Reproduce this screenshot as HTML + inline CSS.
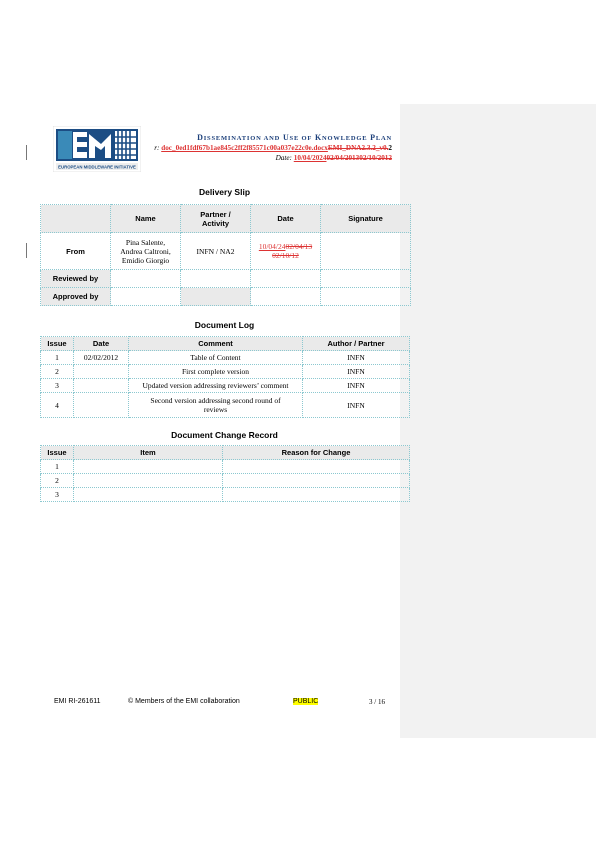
<!DOCTYPE html>
<html><head><meta charset="utf-8"><style>
body{margin:0;width:596px;height:842px;position:relative;background:#fff;overflow:hidden;font-family:"Liberation Sans",sans-serif;}
.a{position:absolute;}
.panel{left:400px;top:104px;width:196px;height:634px;background:#f2f2f2;}
table{position:absolute;border-collapse:collapse;table-layout:fixed;}
td{border:1px dotted #8cc8d0;padding:0;text-align:center;vertical-align:middle;font-family:"Liberation Serif",serif;font-size:7.5px;line-height:9px;}
td.h{background:#eaeaea;font-family:"Liberation Sans",sans-serif;font-weight:bold;font-size:7.5px;}
.t{font-weight:bold;font-size:8.5px;text-align:center;}
.red{color:#d33;text-decoration:line-through;}
.redu{color:#d33;text-decoration:underline;}
</style></head><body>
<div class="a panel"></div>
<div class="a" style="left:26px;top:145px;width:1px;height:15px;background:#777"></div>
<div class="a" style="left:26px;top:243px;width:1px;height:15px;background:#777"></div>
<svg class="a" style="left:53px;top:126px" width="88" height="46" viewBox="0 0 88 46">
<rect x="0" y="0" width="88" height="46" fill="#fff" stroke="#ccc" stroke-width="0.5"/>
<rect x="3" y="3" width="82" height="32" fill="#1c4d84"/>
<rect x="5" y="5" width="14" height="28" fill="#3a8ab8"/>
<rect x="20" y="6" width="14" height="26" fill="#fff"/><rect x="24" y="11" width="10" height="5" fill="#1c4d84"/><rect x="24" y="21" width="10" height="5" fill="#1c4d84"/>
<path d="M36 32 V8 L48 18 L58 8 V32 H52 V20 L48 24 L42 20 V32Z" fill="#fff"/>
<rect x="62" y="5" width="21" height="28" fill="#fff"/>
<path d="M65 5V33M69 5V33M73 5V33M77 5V33M62 11H83M62 17H83M62 23H83M62 29H83" stroke="#1c4d84" stroke-width="1.6"/>
<rect x="3" y="37" width="82" height="7" fill="#eee"/>
<text x="44" y="42.5" font-size="4.3" text-anchor="middle" fill="#1c4d84" font-family="Liberation Sans" font-weight="bold">EUROPEAN MIDDLEWARE INITIATIVE</text>
</svg>
<div class="a" style="right:204px;top:133px;font-family:'Liberation Serif',serif;font-size:8px;font-weight:bold;color:#1c3f7a;letter-spacing:0.8px;white-space:nowrap">D<span style="font-size:6.5px">ISSEMINATION AND</span> U<span style="font-size:6.5px">SE OF</span> K<span style="font-size:6.5px">NOWLEDGE</span> P<span style="font-size:6.5px">LAN</span></div>
<div class="a" style="right:204px;top:144px;font-family:'Liberation Serif',serif;font-size:7.2px;white-space:nowrap;font-weight:bold"><i style="font-weight:normal">r:</i> <span class="redu">doc_0ed1fdf67b1ae845c2ff2f85571c00a037e22c0e.docx</span><span class="red">EMI_DNA2.3.2_v0.</span>2</div>
<div class="a" style="right:204px;top:154px;font-family:'Liberation Serif',serif;font-size:7.2px;white-space:nowrap;font-weight:bold"><i style="font-weight:normal">Date:</i> <span class="redu">10/04/2024</span><span class="red">02/04/2013</span><span class="red">02/10/2012</span></div>

<div class="a t" style="left:40px;width:369px;top:187px">Delivery Slip</div>
<table style="left:40px;top:204px;width:370px">
<col style="width:70px"><col style="width:70px"><col style="width:70px"><col style="width:70px"><col style="width:90px">
<tr style="height:28px"><td class="h"></td><td class="h">Name</td><td class="h">Partner /<br>Activity</td><td class="h">Date</td><td class="h">Signature</td></tr>
<tr style="height:37px"><td class="h" style="background:#fff">From</td><td>Pina Salente,<br>Andrea Caltroni,<br>Emidio Giorgio</td><td>INFN / NA2</td><td><span class="redu">10/04/24</span><span class="red">02/04/13<br>02/10/12</span></td><td></td></tr>
<tr style="height:18px"><td class="h">Reviewed by</td><td></td><td></td><td></td><td></td></tr>
<tr style="height:18px"><td class="h">Approved by</td><td></td><td class="h"></td><td></td><td></td></tr>
</table>

<div class="a t" style="left:40px;width:369px;top:320px">Document Log</div>
<table style="left:40px;top:336px;width:370px">
<col style="width:33px"><col style="width:55px"><col style="width:174px"><col style="width:107px">
<tr style="height:14px"><td class="h">Issue</td><td class="h">Date</td><td class="h">Comment</td><td class="h">Author / Partner</td></tr>
<tr style="height:14px"><td>1</td><td>02/02/2012</td><td>Table of Content</td><td>INFN</td></tr>
<tr style="height:14px"><td>2</td><td></td><td>First complete version</td><td>INFN</td></tr>
<tr style="height:14px"><td>3</td><td></td><td>Updated version addressing reviewers’ comment</td><td>INFN</td></tr>
<tr style="height:25px"><td>4</td><td></td><td>Second version addressing second round of<br>reviews</td><td>INFN</td></tr>
</table>

<div class="a t" style="left:40px;width:369px;top:430px">Document Change Record</div>
<table style="left:40px;top:445px;width:370px">
<col style="width:33px"><col style="width:149px"><col style="width:187px">
<tr style="height:14px"><td class="h">Issue</td><td class="h">Item</td><td class="h">Reason for Change</td></tr>
<tr style="height:14px"><td>1</td><td></td><td></td></tr>
<tr style="height:14px"><td>2</td><td></td><td></td></tr>
<tr style="height:14px"><td>3</td><td></td><td></td></tr>
</table>

<div class="a" style="left:54px;top:698px;font-size:7px">EMI RI-261611</div>
<div class="a" style="left:128px;top:698px;font-size:7px">© Members of the EMI collaboration</div>
<div class="a" style="left:293px;top:698px;font-size:7px;background:#ff0">PUBLIC</div>
<div class="a" style="left:369px;top:698px;font-size:7px;font-family:'Liberation Serif',serif">3 / 16</div>
</body></html>
